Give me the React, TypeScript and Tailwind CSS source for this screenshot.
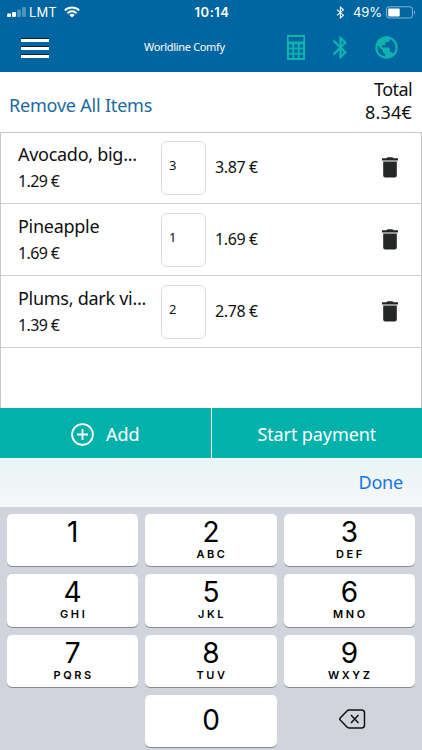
import { useState } from 'react'
import { MdBluetooth, MdPublic } from 'react-icons/md'

interface Item {
  name: string
  price: string
  qty: string
  total: string
}

const initialItems: Item[] = [
  { name: 'Avocado, big...', price: '1.29 €', qty: '3', total: '3.87 €' },
  { name: 'Pineapple', price: '1.69 €', qty: '1', total: '1.69 €' },
  { name: 'Plums, dark vi...', price: '1.39 €', qty: '2', total: '2.78 €' },
]

const keys = [
  ['1', ''],
  ['2', 'ABC'],
  ['3', 'DEF'],
  ['4', 'GHI'],
  ['5', 'JKL'],
  ['6', 'MNO'],
  ['7', 'PQRS'],
  ['8', 'TUV'],
  ['9', 'WXYZ'],
]

function StatusBar() {
  return (
    <div className="flex h-6 items-center font-['Inter',sans-serif] text-[13px] leading-6">
      <div className="flex w-[185px] items-center pl-[7px]">
        <svg width="19" height="12" viewBox="0 0 19 12" fill="#fff">
          <rect x="0" y="7.5" width="4" height="3.5" rx="1" />
          <rect x="5" y="6" width="4" height="5" rx="1" />
          <rect x="10" y="3.5" width="4" height="7.5" rx="1" opacity=".3" />
          <rect x="15" y="1" width="4" height="10" rx="1" opacity=".3" />
        </svg>
        <span className="ml-[3px] w-[35px] tracking-[0.1px]">LMT</span>
        <svg width="16" height="12" viewBox="0 0 16 12" fill="none" stroke="#fff" strokeWidth="2">
          <path d="M.8 4.4a10.200 10.200 0 0 1 14.400 0" />
          <path d="M3.4 7.2a6.500 6.500 0 0 1 9.200 0" />
          <path d="M8 11.600 5.400 9a3.700 3.700 0 0 1 5.200 0z" fill="#fff" stroke="none" />
        </svg>
      </div>
      <span className="w-[54px] text-center font-semibold tracking-[0.5px]">10:14</span>
      <div className="flex flex-1 items-center justify-end pr-[5px]">
        <svg width="9" height="13" viewBox="0 0 9 13" fill="none" stroke="#fff" strokeWidth="1.1">
          <path d="m1 3.600 6.400 5.600-3 2.700V1.100l3 2.700L1 9.400" />
        </svg>
        <span className="ml-[8px] tracking-[-0.1px]">49%</span>
        <svg className="ml-1" width="31" height="13" viewBox="0 0 31 13">
          <rect x=".5" y=".8" width="26" height="11.2" rx="2.5" fill="none" stroke="#fff" strokeOpacity=".5" />
          <rect x="2.2" y="2.4" width="11.5" height="8" rx=".8" fill="#fff" />
          <path d="M28 4.400c1.600.6 1.600 3.400 0 4z" fill="#fff" opacity=".5" />
        </svg>
      </div>
    </div>
  )
}

function CalculatorIcon() {
  return (
    <svg width="18" height="25" viewBox="0 0 18 25" fill="currentColor" fillRule="evenodd">
      <path d="M0 0h18v25H0z M1.600 2h14.800v4.600H1.600z M2 9.200h3.300v3.300H2z M7.300 9.200h3.400v3.300H7.300z M12.700 9.200H16v3.300h-3.300z M2 14.500h3.300v3.300H2z M7.300 14.500h3.400v3.300H7.300z M12.700 14.500H16v3.300h-3.300z M2 19.800h3.300v3.300H2z M7.300 19.800h3.400v3.300H7.300z M12.700 19.800H16v3.300h-3.300z" />
    </svg>
  )
}

function TrashIcon() {
  return (
    <svg width="16" height="21" viewBox="0 0 16 21" fill="#262828">
      <path d="M0 1.200h4.200Q5 .2 6.200.2h3.600q1.200 0 2 1H16v2.200H0z" />
      <path d="M1.200 4.600h13.600v13.800a2 2 0 0 1-2 2H3.200a2 2 0 0 1-2-2z" />
    </svg>
  )
}

function ItemRow({ item, onRemove }: { item: Item; onRemove: () => void }) {
  return (
    <div className="flex h-[72px] items-center border-b border-[#d0d0d0] pl-[17px] pr-[23px] font-[450]">
      <div className="w-[143px] whitespace-nowrap">
        <div className="text-[18px] leading-[27px] tracking-[-0.28px]">{item.name}</div>
        <div className="text-[16px] leading-[26px] tracking-[-0.62px]">{item.price}</div>
      </div>
      <div className="flex h-[54px] w-[45px] items-center rounded-[6px] border border-[#dcdcdc] pl-[7px] pb-[3px] text-[13px]">
        {item.qty}
      </div>
      <div className="ml-[9px] flex-1 pb-[2px] text-[16px] tracking-[-0.4px]">{item.total}</div>
      <button onClick={onRemove}>
        <TrashIcon />
      </button>
    </div>
  )
}

function Keypad() {
  return (
    <div className="grid flex-1 grid-cols-3 content-start gap-x-[7px] gap-y-[8px] bg-[#d1d4dc] px-[7px] pt-[7px] font-['Inter',sans-serif] text-black">
      {keys.map(([digit, letters]) => (
        <button
          key={digit}
          className="flex h-[52.3px] flex-col items-center rounded-[5px] bg-white pt-[3px] shadow-[0_1px_0_#898b8f]"
        >
          <span className="text-[28px] leading-[30px] font-[370]">{digit}</span>
          {letters && (
            <span className="pl-[2px] text-[11px] leading-[14px] font-semibold tracking-[2.6px]">{letters}</span>
          )}
        </button>
      ))}
      <div />
      <button className="flex h-[52.3px] items-center justify-center rounded-[5px] bg-white pb-[2px] text-[28px] leading-[30px] font-[370] shadow-[0_1px_0_#898b8f]">
        0
      </button>
      <button className="flex items-center justify-center pb-[3px] pl-[6px]">
        <svg width="27" height="21" viewBox="0 0 27 21" fill="none" stroke="#111" strokeWidth="1.5" strokeLinejoin="round">
          <path d="M10 1h12.500A3 3 0 0 1 25.500 4v12a3 3 0 0 1-3 3H10a3 3 0 0 1-2-.9L1.400 11.200a1.700 1.700 0 0 1 0-2.400L8 1.900A3 3 0 0 1 10 1z" />
          <path d="m12 6 7.500 8M19.500 6 12 14" />
        </svg>
      </button>
    </div>
  )
}

export default function App() {
  const [items, setItems] = useState(initialItems)

  return (
    <div className="flex h-[750px] w-[422px] flex-col overflow-hidden bg-white font-['Noto_Sans',sans-serif] text-[#111]">
      <header className="h-[72px] bg-[#0066a1] text-white">
        <StatusBar />
        <div className="flex h-[47px] items-center pl-[21px] pr-[22px]">
          <button className="flex w-[123px] flex-col gap-[4px]">
            <span className="h-[4px] w-[28px] border-t border-[#17222c] bg-white" />
            <span className="h-[4px] w-[28px] border-t border-[#17222c] bg-white" />
            <span className="h-[4px] w-[28px] border-t border-[#17222c] bg-white" />
          </button>
          <h1 className="flex-1 text-[11px] font-[450] tracking-[-0.32px] whitespace-nowrap">Worldline Comfy</h1>
          <div className="flex items-center text-[#0db3ac]">
            <CalculatorIcon />
            <MdBluetooth size={27} className="ml-[22px]" />
            <MdPublic size={27} className="ml-[19px]" />
          </div>
        </div>
      </header>

      <div className="flex h-[60px] justify-between px-[9px] font-[450]">
        <button
          className="mt-[5px] self-center text-[18px] leading-6 tracking-[-0.2px] text-[#1b6a9f]"
          onClick={() => setItems([])}
        >
          Remove All Items
        </button>
        <div className="pt-[6px] pr-px text-right text-[18px] leading-[23px]">
          <div className="tracking-[-0.6px]">Total</div>
          <div className="tracking-[0.2px]">8.34€</div>
        </div>
      </div>

      <div className="h-[276px] border-x border-t border-[#c8c8c8]">
        <div className="-mt-px">
          {items.map(item => (
            <ItemRow key={item.name} item={item} onRemove={() => setItems(items.filter(i => i !== item))} />
          ))}
        </div>
      </div>

      <div className="flex h-[50px] gap-px bg-white text-[18px] text-white">
        <button className="flex flex-1 items-center justify-center gap-[12px] bg-[#02b2aa] pt-[3px]">
          <svg width="23" height="23" viewBox="0 0 23 23" fill="none" stroke="#fff" strokeWidth="1.8">
            <circle cx="11.5" cy="11.5" r="10.4" />
            <path d="M11.500 6v11M6 11.500h11" />
          </svg>
          Add
        </button>
        <button className="flex-1 bg-[#02b2aa] pt-[3px] tracking-[-0.1px]">Start payment</button>
      </div>

      <div className="flex h-[49px] items-center justify-end bg-linear-to-b from-[#e9f5f6] to-[#f6f7f8] pr-[19px]">
        <button className="text-[18px] font-[450] tracking-[-0.2px] text-[#1475e8]">Done</button>
      </div>

      <Keypad />
    </div>
  )
}
